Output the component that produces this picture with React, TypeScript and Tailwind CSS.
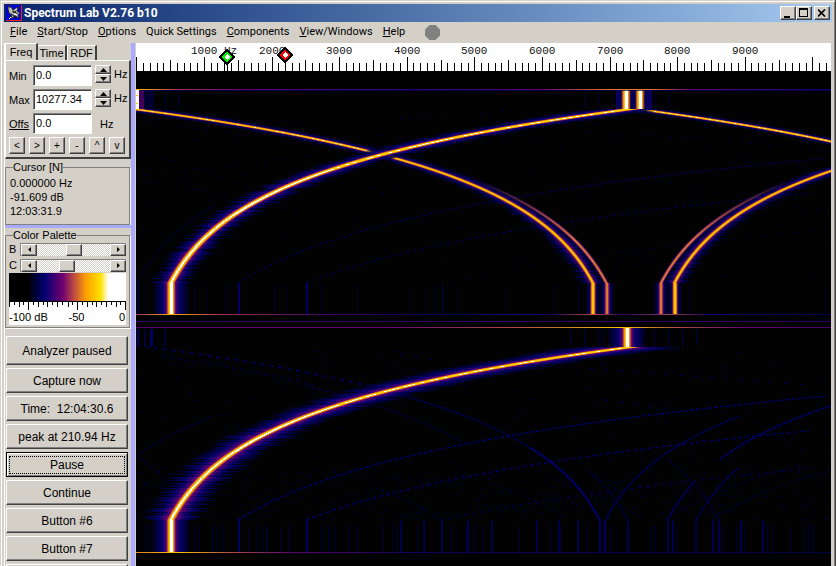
import React from 'react'

const raised =
  'border border-t-white border-l-white border-r-[#404040] border-b-[#404040] bg-[#d4d0c8] shadow-[inset_-1px_-1px_0_#808080]'

const sunken =
  'border border-t-[#808080] border-l-[#808080] border-r-white border-b-white bg-white shadow-[inset_1px_1px_0_#404040]'

const menus = [
  { key: 'F', rest: 'ile' },
  { key: 'S', rest: 'tart/Stop' },
  { key: 'O', rest: 'ptions' },
  { key: '', rest: 'Quick Settings' },
  { key: 'C', rest: 'omponents' },
  { key: 'V', rest: 'iew/Windows' },
  { key: 'H', rest: 'elp' },
]

const actions = ['Capture now', 'Time:  12:04:30.6', 'peak at 210.94 Hz', 'Pause', 'Continue', 'Button #6', 'Button #7']

/* ---------- spectrogram maths ---------- */

// frequency in Hz -> horizontal position
const fx = (f: number) => 136.8 + f * 0.0676

const LOW = 500
const HIGH = 7250
const RATIO = Math.log(HIGH / LOW)

// small repeatable random generator, keeps the noise stable between renders
function random(seed: number) {
  let s = seed
  return () => {
    s = (s * 16807) % 2147483647
    return s / 2147483647
  }
}

type Kind = 'hot' | 'warm' | 'red'

const coreFill = { hot: 'url(#coreHot)', warm: 'url(#coreWarm)', red: 'url(#coreRed)' }

type Trace = {
  top: number
  bottom: number
  gain: number
  offset: number
  wide: number
  spread: number
  kind: Kind
  from?: number
  seed: number
}

function SweepTrace({ top, bottom, gain, offset, wide, spread, kind, from = 0, seed }: Trace) {
  const rnd = random(seed)
  const glows: React.ReactNode[] = []
  const cores: React.ReactNode[] = []
  for (let y = top; y < bottom; y++) {
    const t = (bottom - y) / (bottom - top)
    const f = LOW * Math.exp(RATIO * t)
    const x = fx(gain * f + offset)
    const step = f * (RATIO / (bottom - top)) * 0.0676
    const r = rnd()
    if (x < 100 || x > 870 || y < from) continue
    const fade = from ? Math.min(1, (y - from) / 60) : 1
    const half = wide * (r > 0.7 ? 1.1 : r < 0.25 ? 0.6 : 0.9) + step * spread
    const core = step * 1.3 + (kind === 'hot' ? 4 : 2)
    glows.push(
      <rect key={y} x={x - half} y={y} width={half * 2} height="1" opacity={fade} fill={kind === 'hot' ? 'url(#glow)' : 'url(#glowDim)'} />,
    )
    cores.push(
      <g key={y} opacity={fade}>
        <rect x={x - core} y={y} width={core * 2} height="1" fill={coreFill[kind]} />
        {kind === 'hot' && (step < 3 || r > 0.35) && <rect x={x - 1} y={y} width={step < 1.5 ? 2 : 3} height="1" fill="#ffffff" />}
        {kind === 'warm' && step > 3.5 && r > 0.45 && <rect x={x - 1} y={y} width="2" height="1" fill="#fff8a0" />}
      </g>,
    )
  }
  return (
    <>
      {glows}
      {cores}
    </>
  )
}

function sweepPath(top: number, bottom: number, gain: number, offset: number, t0 = 0, t1 = 1) {
  let d = ''
  for (let i = 0; i <= 60; i++) {
    const t = t0 + ((t1 - t0) * i) / 60
    const x = fx(Math.abs(gain * LOW * Math.exp(RATIO * t) + offset))
    const y = bottom - (bottom - top) * t
    if (x > 840) break
    d += `${d ? 'L' : 'M'}${x.toFixed(1)} ${y.toFixed(1)}`
  }
  return d
}

function noisePath(seed: number, count: number, top: number, height: number) {
  const rnd = random(seed)
  let d = ''
  for (let i = 0; i < count; i++) {
    const x = 136 + Math.floor(rnd() * 692)
    const y = top + Math.floor(rnd() * height)
    const w = rnd() > 0.6 ? 2 : 1
    d += `M${x} ${y}h${w}v1h-${w}z`
  }
  return d
}

const lowerLines = [
  144, 148, 154, 194, 198, 212, 217, 222, 239, 248, 257, 263, 266, 280, 288, 307, 321, 329, 334, 348, 357, 383, 392, 397, 401,
  417, 424, 442, 451, 466, 468, 474, 483, 492, 519, 537, 550, 560, 578, 587, 610, 628, 650, 654, 673, 677, 713, 719, 722, 736,
  740, 745, 763, 767, 772, 790, 804, 808, 813,
]
const lowerStrong = [239, 307, 401, 424, 442, 468, 492, 537, 559, 578, 600, 605, 628, 668, 673, 696, 713, 719, 741, 763]
const upperLines = [144, 158, 187, 194, 206, 224, 229, 239, 274, 286, 321, 357, 409, 424, 435, 442, 457, 504, 555, 578, 689, 825]

function Ruler() {
  const ticks: React.ReactNode[] = []
  for (let i = 0; i <= 102; i++) {
    const h = i % 10 === 0 ? 14 : i % 5 === 0 ? 11 : 8
    ticks.push(<rect key={i} x={Math.floor(fx(i * 100))} y={71 - h} width="1" height={h} fill="#000" />)
  }
  return (
    <g>
      <rect x="136" y="43" width="695" height="28" fill="#fff" />
      {ticks}
      <g fontFamily='"Liberation Mono", monospace' fontSize="11" fill="#111">
        {[1, 2, 3, 4, 5, 6, 7, 8, 9].map((n) => (
          <text key={n} x={Math.floor(fx(n * 1000) - 13)} y="54">
            {n === 1 ? '1000 Hz' : `${n}000`}
          </text>
        ))}
      </g>
      <path d="M227 50l7 7-7 7-7-7z" fill="#00f000" stroke="#000" strokeWidth="1.5" />
      <path d="M227 54l3 3-3 3-3-3z" fill="#fff" />
      <path d="M285 48l7 7-7 7-7-7z" fill="#f00" stroke="#000" strokeWidth="1.5" />
      <path d="M285 52l3 3-3 3-3-3z" fill="#fff" />
      <path d="M285 62v9M227 64v7" stroke="#000" />
    </g>
  )
}

function Bar({ x, top, height, kind, glow = 8 }: { x: number; top: number; height: number; kind: Kind; glow?: number }) {
  const core = kind === 'hot' ? 5 : 3
  return (
    <g>
      <rect x={x - glow} y={top} width={glow * 2} height={height} fill={kind === 'hot' ? 'url(#glow)' : 'url(#glowDim)'} />
      <rect x={x - core} y={top} width={core * 2} height={height} fill={coreFill[kind]} />
      {kind === 'hot' && <rect x={x - 1} y={top} width="3" height={height} fill="#fff" />}
    </g>
  )
}

function Spectrogram() {
  return (
    <svg viewBox="136 43 695 523" className="block h-auto w-full" role="img" aria-label="Spectrogram" shapeRendering="crispEdges">
      <defs>
        <linearGradient id="glow">
          <stop offset="0" stopColor="#00003c" stopOpacity="0" />
          <stop offset=".12" stopColor="#000040" stopOpacity=".85" />
          <stop offset=".28" stopColor="#08006c" />
          <stop offset=".4" stopColor="#5a0070" />
          <stop offset=".5" stopColor="#b03c48" />
          <stop offset=".6" stopColor="#5a0070" />
          <stop offset=".72" stopColor="#08006c" />
          <stop offset=".88" stopColor="#000040" stopOpacity=".85" />
          <stop offset="1" stopColor="#00003c" stopOpacity="0" />
        </linearGradient>
        <linearGradient id="glowDim">
          <stop offset="0" stopColor="#00003c" stopOpacity="0" />
          <stop offset=".28" stopColor="#000060" stopOpacity=".9" />
          <stop offset=".5" stopColor="#7a0070" />
          <stop offset=".72" stopColor="#000060" stopOpacity=".9" />
          <stop offset="1" stopColor="#00003c" stopOpacity="0" />
        </linearGradient>
        <linearGradient id="coreHot">
          <stop offset="0" stopColor="#a03050" stopOpacity="0" />
          <stop offset=".2" stopColor="#e87818" />
          <stop offset=".36" stopColor="#ffd000" />
          <stop offset=".64" stopColor="#ffd000" />
          <stop offset=".8" stopColor="#e87818" />
          <stop offset="1" stopColor="#a03050" stopOpacity="0" />
        </linearGradient>
        <linearGradient id="coreWarm">
          <stop offset="0" stopColor="#a03050" stopOpacity="0" />
          <stop offset=".26" stopColor="#e88010" />
          <stop offset=".42" stopColor="#ffc400" />
          <stop offset=".58" stopColor="#ffc400" />
          <stop offset=".74" stopColor="#e88010" />
          <stop offset="1" stopColor="#a03050" stopOpacity="0" />
        </linearGradient>
        <linearGradient id="coreRed">
          <stop offset="0" stopColor="#500068" stopOpacity="0" />
          <stop offset=".26" stopColor="#903060" />
          <stop offset=".42" stopColor="#e07828" />
          <stop offset=".58" stopColor="#e07828" />
          <stop offset=".74" stopColor="#903060" />
          <stop offset="1" stopColor="#500068" stopOpacity="0" />
        </linearGradient>
        <linearGradient id="lineA">
          <stop offset="0" stopColor="#ffc000" />
          <stop offset=".06" stopColor="#a03050" />
          <stop offset=".16" stopColor="#600070" />
          <stop offset=".4" stopColor="#280070" />
          <stop offset=".58" stopColor="#600070" />
          <stop offset=".68" stopColor="#e07820" />
          <stop offset=".74" stopColor="#e07820" />
          <stop offset=".8" stopColor="#600070" />
          <stop offset="1" stopColor="#100070" />
        </linearGradient>
        <linearGradient id="lineB">
          <stop offset="0" stopColor="#903060" />
          <stop offset=".05" stopColor="#ffb000" />
          <stop offset=".12" stopColor="#a03050" />
          <stop offset=".28" stopColor="#400068" />
          <stop offset=".45" stopColor="#000058" />
          <stop offset=".6" stopColor="#200068" />
          <stop offset=".66" stopColor="#c05038" />
          <stop offset=".7" stopColor="#200068" />
          <stop offset=".77" stopColor="#a04050" />
          <stop offset=".82" stopColor="#200068" />
          <stop offset="1" stopColor="#000050" />
        </linearGradient>
        <linearGradient id="lineC">
          <stop offset="0" stopColor="#600070" />
          <stop offset=".35" stopColor="#700070" />
          <stop offset=".55" stopColor="#b04848" />
          <stop offset=".7" stopColor="#ffc000" />
          <stop offset=".78" stopColor="#b04848" />
          <stop offset=".88" stopColor="#700070" />
          <stop offset="1" stopColor="#480070" />
        </linearGradient>
        <linearGradient id="lineD">
          <stop offset="0" stopColor="#e08020" />
          <stop offset=".06" stopColor="#ffc000" />
          <stop offset=".14" stopColor="#b04848" />
          <stop offset=".22" stopColor="#600070" />
          <stop offset=".4" stopColor="#100060" />
          <stop offset="1" stopColor="#000048" />
        </linearGradient>
      </defs>

      <rect x="136" y="43" width="695" height="523" fill="#020202" />

      {/* background noise */}
      <path d={noisePath(11, 260, 110, 170)} fill="#00002c" />
      <path d={noisePath(23, 420, 348, 172)} fill="#00003c" />
      <path d={noisePath(37, 520, 470, 50)} fill="#00003c" />

      {/* weak harmonics and mirror products */}
      <g fill="none" stroke="#000068" strokeWidth="1" shapeRendering="auto">
        <path d={sweepPath(109, 283, 3, 0)} strokeDasharray="3 3" />
        <path d={sweepPath(109, 283, 5, 0)} strokeDasharray="3 4" />
        <path d={sweepPath(109, 283, 9, 0)} strokeDasharray="2 6" opacity=".5" />
        <path d={sweepPath(109, 283, 1, -500, 0.02, 0.45)} opacity=".6" />
        <path d={sweepPath(109, 283, -1, 3800, 0.4, 0.75)} strokeDasharray="2 7" opacity=".6" />
        <path d="M136 120L250 136M136 176L310 156M136 180L230 195M400 119L520 110M380 150L560 138M590 133L700 138L831 151M590 184L640 178L831 212" strokeDasharray="2 8" opacity=".6" />
        <path d="M611 276Q632 226 657 276" strokeDasharray="2 4" opacity=".5" />

        <path d={sweepPath(347, 520, 3, 0)} strokeDasharray="4 2" strokeWidth="1.4" />
        <path d={sweepPath(347, 520, 5, 0)} strokeDasharray="4 3" strokeWidth="1.3" />
        <path d={sweepPath(347, 520, 9, 0)} strokeDasharray="3 5" />
        <path d={sweepPath(347, 520, -1, 7350, 0, 0.42)} strokeWidth="2" />
        <path d={sweepPath(347, 520, -1, 7350, 0.42, 0.75)} />
        <path d={sweepPath(347, 520, -1, 6480, 0.45, 0.78)} opacity=".6" />
        <path d={sweepPath(347, 520, 1, 6430, 0, 0.6)} strokeWidth="1.4" opacity=".8" />
        <path d={sweepPath(347, 520, 1, 7350, 0, 0.22)} strokeWidth="1.4" />
        <path d={sweepPath(347, 520, 1, 7350, 0.35, 0.7)} strokeDasharray="5 1" strokeWidth="1.6" />
        <path d={sweepPath(347, 520, 1, 7780, 0, 0.3)} strokeWidth="1.4" opacity=".8" />
        <path d={sweepPath(347, 520, -1, 7765, 0, 0.3)} opacity=".8" />
        <path d={sweepPath(347, 520, -1, 9120, 0, 0.35)} opacity=".8" />
        <path d={sweepPath(347, 520, 1, -1350, 0.2, 0.6)} opacity=".6" />
        <path d={sweepPath(347, 520, -3, 9000, 0.01, 0.25)} strokeDasharray="3 3" opacity=".6" />
        <path d={sweepPath(347, 520, -3, 7900, 0.01, 0.22)} strokeDasharray="3 3" opacity=".6" />
        <path d={sweepPath(347, 520, -3, 6000, 0.01, 0.2)} strokeDasharray="3 3" opacity=".6" />
        <path d={sweepPath(347, 520, 3, 6300, 0, 0.3)} strokeDasharray="3 3" opacity=".6" />
        <path d={sweepPath(347, 520, 3, 7000, 0, 0.3)} strokeDasharray="3 3" opacity=".7" />
        <path d={sweepPath(347, 520, -1, 7400, 0.76, 1)} strokeDasharray="4 5" strokeWidth="1.4" />
        <path d={sweepPath(347, 520, -1, 6650, 0.78, 0.95)} strokeDasharray="3 5" />
        <path d={sweepPath(347, 520, -1, 14700, 0.8, 1)} strokeDasharray="4 4" strokeWidth="1.4" />
        <path d="M590 369L640 372L720 378L810 385M400 354L440 361M605 400L680 410" strokeDasharray="3 12" />
      </g>

      <g fill="#000034">
        {lowerLines.map((x) => (
          <rect key={x} x={x} y="525" width="1" height="27" />
        ))}
        {upperLines.map((x) => (
          <rect key={x} x={x} y="284" width="1" height="30" opacity=".7" />
        ))}
      </g>
      <g fill="#000064">
        {lowerStrong.map((x) => (
          <rect key={x} x={x - 1} y="520" width="2" height="32" opacity={x === 600 || x === 605 || x === 239 || x === 307 ? 1 : 0.7} />
        ))}
        <rect x="238" y="283" width="2" height="31" />
        <rect x="306" y="283" width="2" height="31" />
        <rect x="442" y="287" width="1" height="27" opacity=".8" />
        <rect x="137" y="280" width="2" height="34" opacity=".6" />
        {[151, 165, 179].map((x) => (
          <rect key={x} x={x} y="91" width="1" height="18" opacity=".6" />
        ))}
        {[584, 598, 612, 654, 668].map((x) => (
          <rect key={x} x={x} y="91" width="1" height="18" opacity=".5" />
        ))}
        <rect x="137" y="329" width="2" height="18" />
        <rect x="144" y="329" width="1" height="18" />
        <rect x="150" y="329" width="3" height="18" />
        <rect x="165" y="329" width="1" height="18" />
        {[570, 584, 598, 603, 654, 668, 682, 696].map((x) => (
          <rect key={x} x={x} y="329" width="1" height="18" opacity=".6" />
        ))}
      </g>

      {/* upper recording */}
      <SweepTrace top={109} bottom={283} gain={-1} offset={7250} wide={14} spread={3} kind="warm" seed={5} />
      <SweepTrace top={109} bottom={283} gain={1} offset={7450} wide={14} spread={3} kind="warm" seed={9} />
      <SweepTrace top={109} bottom={283} gain={-1} offset={7450} wide={3} spread={1} kind="red" from={180} seed={61} />
      <SweepTrace top={109} bottom={283} gain={1} offset={7250} wide={3} spread={1} kind="red" from={180} seed={67} />
      <SweepTrace top={109} bottom={283} gain={-1} offset={14700} wide={8} spread={3} kind="warm" seed={13} />
      <SweepTrace top={109} bottom={283} gain={1} offset={0} wide={20} spread={3} kind="hot" seed={17} />
      <Bar x={171} top={283} height={31} kind="hot" glow={18} />
      <Bar x={593} top={283} height={31} kind="warm" />
      <Bar x={607} top={283} height={31} kind="red" />
      <Bar x={661} top={283} height={31} kind="red" />
      <Bar x={675} top={283} height={31} kind="warm" />
      <rect x="616" y="90" width="36" height="19" fill="#08005c" />
      <Bar x={626} top={90} height={19} kind="hot" glow={7} />
      <Bar x={640} top={90} height={19} kind="hot" glow={7} />
      <rect x="136" y="90" width="18" height="19" fill="#000030" />
      <rect x="139" y="90" width="5" height="19" fill="#400058" />
      <rect x="136" y="90" width="3" height="19" fill="#fff" />
      <rect x="136" y="95" width="2" height="1" fill="#ffc800" />
      <rect x="136" y="103" width="2" height="1" fill="#ffc800" />

      {/* lower recording */}
      <SweepTrace top={347} bottom={520} gain={1} offset={0} wide={27} spread={5} kind="hot" seed={29} />
      <Bar x={171} top={520} height={32} kind="hot" glow={20} />
      <Bar x={627} top={328} height={19} kind="hot" glow={20} />

      <rect x="136" y="89" width="695" height="1" fill="url(#lineA)" />
      <rect x="139" y="90" width="692" height="1" fill="#000060" opacity=".7" />
      <rect x="136" y="314" width="695" height="1" fill="url(#lineB)" />
      <rect x="136" y="321" width="695" height="1" fill="#28006c" />
      <rect x="136" y="327" width="695" height="1" fill="url(#lineC)" />
      <rect x="136" y="552" width="695" height="1" fill="url(#lineD)" />

      <Ruler />
    </svg>
  )
}

/* ---------- left hand panel ---------- */

function Spinner({ label }: { label: string }) {
  return (
    <div className="ml-[3px] flex w-4 flex-col">
      <button aria-label={`${label} up`} className={`${raised} flex h-[9px] items-center justify-center`}>
        <svg width="7" height="4" viewBox="0 0 7 4"><path d="M0 4L3.5 0L7 4z" /></svg>
      </button>
      <button aria-label={`${label} down`} className={`${raised} flex h-[9px] items-center justify-center`}>
        <svg width="7" height="4" viewBox="0 0 7 4"><path d="M0 0L3.5 4L7 0z" /></svg>
      </button>
    </div>
  )
}

function FreqRow({ id, label, value, spin }: { id: string; label: string; value: string; spin?: boolean }) {
  return (
    <div className="flex h-6 items-start">
      <label htmlFor={id} className={`w-6 pt-1 ${spin ? '' : 'underline'}`}>
        {label}
      </label>
      <input id={id} defaultValue={value} className={`${sunken} h-[21px] w-[59px] pb-0.5 pl-0.5 outline-none`} />
      {spin && <Spinner label={label} />}
      <span className={spin ? 'pt-0.5 pl-[3px]' : 'pt-1 pl-2'}>Hz</span>
    </div>
  )
}

function ScrollSlider({ label, value }: { label: string; value: number }) {
  return (
    <div className="flex h-4 items-center">
      <label htmlFor={`slider-${label}`} className="w-[11px]">{label}</label>
      <div className="flex h-[13px] flex-1 border-t border-l border-[#808080]">
        <button aria-label={`${label} less`} className={`${raised} flex w-4 items-center justify-center`}>
          <svg width="3" height="5" viewBox="0 0 3 5"><path d="M3 0L0 2.5L3 5z" /></svg>
        </button>
        <input
          id={`slider-${label}`}
          type="range"
          defaultValue={value}
          className="m-0 h-3 w-0 min-w-0 flex-1 appearance-none bg-[repeating-conic-gradient(#fff_0_25%,#d4d0c8_0_50%)] bg-[length:2px_2px] [&::-webkit-slider-thumb]:h-3 [&::-webkit-slider-thumb]:w-4 [&::-webkit-slider-thumb]:appearance-none [&::-webkit-slider-thumb]:border [&::-webkit-slider-thumb]:border-t-white [&::-webkit-slider-thumb]:border-r-[#404040] [&::-webkit-slider-thumb]:border-b-[#404040] [&::-webkit-slider-thumb]:border-l-white [&::-webkit-slider-thumb]:bg-[#d4d0c8] [&::-webkit-slider-thumb]:shadow-[inset_-1px_-1px_0_#808080]"
        />
        <button aria-label={`${label} more`} className={`${raised} flex w-4 items-center justify-center`}>
          <svg width="3" height="5" viewBox="0 0 3 5"><path d="M0 0L3 2.5L0 5z" /></svg>
        </button>
      </div>
    </div>
  )
}

function PaletteScale() {
  return (
    <svg viewBox="0 0 116 52" className="block h-auto w-full" role="img" aria-label="Color scale from -100 dB to 0">
      <defs>
        <linearGradient id="pal">
          <stop offset="0" stopColor="#000" />
          <stop offset=".16" stopColor="#000" />
          <stop offset=".3" stopColor="#000070" />
          <stop offset=".46" stopColor="#700070" />
          <stop offset=".56" stopColor="#c05040" />
          <stop offset=".66" stopColor="#ffa000" />
          <stop offset=".78" stopColor="#ffe000" />
          <stop offset=".85" stopColor="#fff" />
        </linearGradient>
      </defs>
      <rect width="116" height="52" fill="#fff" />
      <rect width="116" height="28" fill="url(#pal)" />
      <g shapeRendering="crispEdges">
        <rect y="28" width="116" height="1" />
        {Array.from({ length: 25 }, (_, i) => (
          <rect key={i} x={Math.round(i * 4.8)} y="28" width="1" height={i % 10 === 4 ? 9 : i % 2 === 0 ? 6 : 4} />
        ))}
      </g>
      <g fontFamily='"Liberation Sans", sans-serif' fontSize="11">
        <text x="0" y="48">-100 dB</text>
        <text x="59" y="48">-50</text>
        <text x="109" y="48">0</text>
      </g>
    </svg>
  )
}

function Sidebar() {
  return (
    <aside className="flex w-[127px] shrink-0 flex-col overflow-hidden border-l border-white bg-[#d4d0c8] text-[11px] leading-[14px] *:shrink-0">
      <div role="tablist" className="flex h-[17px] items-end">
        <button role="tab" aria-selected="true" className="h-[17px] w-[33px] border-t border-r-2 border-l border-t-white border-r-[#404040] border-l-white">
          Freq
        </button>
        <button role="tab" aria-selected="false" className="h-[15px] w-[29px] border-t border-r-2 border-t-white border-r-[#404040]">
          Time
        </button>
        <button role="tab" aria-selected="false" className="h-[15px] w-[30px] border-t border-r-2 border-l border-t-white border-r-[#404040] border-l-white">
          RDF
        </button>
      </div>
      <div className="h-[99px] border border-r-2 border-b-2 border-white border-r-[#404040] border-b-[#404040] pt-1 pl-[3px]">
        <FreqRow id="min" label="Min" value="0.0" spin />
        <FreqRow id="max" label="Max" value="10277.34" spin />
        <FreqRow id="offs" label="Offs" value="0.0" />
        <div className="flex gap-1">
          {['<', '>', '+', '-', '^', 'v'].map((s) => (
            <button key={s} className={`${raised} h-[17px] w-4 text-[10px] leading-[14px]`}>
              {s}
            </button>
          ))}
        </div>
      </div>

      <fieldset className="mt-px mr-px h-[65px] min-w-0 border border-[#808080] px-1 shadow-[1px_1px_0_#fff]">
        <legend className="ml-[3px]">Cursor [N]</legend>
        <div className="pt-0.5">0.000000 Hz</div>
        <div>-91.609 dB</div>
        <div>12:03:31.9</div>
      </fieldset>
      <div className="h-[3px] bg-[#aaaaff]" />
      <fieldset className="mt-px mr-px h-[99px] min-w-0 border border-[#808080] px-[3px] shadow-[1px_1px_0_#fff]">
        <legend className="ml-1 leading-[12px]">Color Palette</legend>
        <ScrollSlider label="B" value={50} />
        <ScrollSlider label="C" value={39} />
        <PaletteScale />
      </fieldset>

      <div className="mt-2 mr-[3px] ml-px flex flex-col gap-[3px] text-xs">
        <button className={`${raised} h-[29px]`}>Analyzer paused</button>
        {actions.map((a) =>
          a === 'Pause' ? (
            <button key={a} className="h-[25px] border border-black bg-[#d4d0c8] p-0.5 shadow-[inset_1px_1px_0_#fff,inset_-1px_-1px_0_#808080]">
              <span className="block border border-dotted border-black">{a}</span>
            </button>
          ) : (
            <button key={a} className={`${raised} h-[25px] whitespace-pre`}>
              {a}
            </button>
          ),
        )}
        <button aria-label="Button 8" className={`${raised} h-[25px]`} />
      </div>
    </aside>
  )
}

function TitleBar() {
  return (
    <header className="flex h-[18px] shrink-0 items-center bg-linear-to-r from-[#0a246a] to-[#a6caf0] pr-0.5 pl-0.5 text-white">
      <svg width="16" height="16" viewBox="0 0 16 16" className="shrink-0" aria-hidden="true">
        <rect width="16" height="16" fill="#0000d8" />
        <path d="M0 15.5h16M15.5 0v16" stroke="#f02020" />
        <path d="M2 1l3 1 2 3 3-2 3-1-2 4 3 2-2 2 1 3-4-2-3 2H4l2-3-3-2-1-4z" fill="#b8b8b0" stroke="#181818" strokeWidth=".8" />
        <path d="M3 2l5 6 4-5M5 9l6 3M7 6l5 3M6 11l-3 3M8 11l1 3" stroke="#202020" fill="none" />
        <path d="M4 3l2 3M9 5l2-1M8 9l3 1M3 14l2-2" stroke="#fff" />
      </svg>
      <h1 className="ml-0.5 flex-1 font-['Roboto',sans-serif] text-xs leading-[18px] font-bold">Spectrum Lab V2.76 b10</h1>
      <div className="flex text-black">
        <button aria-label="Minimize" className={`${raised} flex h-3.5 w-4 items-center justify-center`}>
          <svg width="10" height="10" viewBox="0 0 10 10"><path d="M1 8h6v2H1z" /></svg>
        </button>
        <button aria-label="Maximize" className={`${raised} flex h-3.5 w-4 items-center justify-center`}>
          <svg width="10" height="10" viewBox="0 0 10 10"><path d="M0 0h9v9H0zM1 2v6h7V2z" fillRule="evenodd" /></svg>
        </button>
        <button aria-label="Close" className={`${raised} ml-0.5 flex h-3.5 w-4 items-center justify-center`}>
          <svg width="8" height="8" viewBox="0 0 8 8"><path d="M0 .5l7 7M7 .5l-7 7" stroke="#000" strokeWidth="1.6" /></svg>
        </button>
      </div>
    </header>
  )
}

export default function App() {
  return (
    <div className="flex h-screen overflow-hidden border-r border-[#404040] bg-[#d4d0c8] pt-px pl-px font-['Liberation_Sans',Arial,sans-serif] text-black">
      <div className="flex min-w-0 flex-1 flex-col border-t border-r border-l border-t-white border-r-[#808080] border-l-white px-0.5 pt-0.5">
        <TitleBar />
        <nav className="flex h-[21px] shrink-0 items-center gap-2.5 pl-1.5 font-['Roboto',sans-serif] text-[11px]">
          {menus.map((m) => (
            <button key={m.rest} className="whitespace-nowrap">
              {m.key && <span className="underline">{m.key}</span>}
              {m.rest}
            </button>
          ))}
          <svg width="15" height="15" viewBox="0 0 15 15" className="ml-2.5" aria-hidden="true">
            <path d="M4.5 0h6L15 4.5v6L10.5 15h-6L0 10.5v-6z" fill="#808080" />
          </svg>
        </nav>
        <div className="flex min-h-0 flex-1 items-stretch">
          <Sidebar />
          <div className="w-1 shrink-0 bg-[#aaaaff]" />
          <main className="min-w-0 flex-1 border-l border-[#d4d0c8] pr-px">
            <Spectrogram />
          </main>
        </div>
      </div>
    </div>
  )
}
